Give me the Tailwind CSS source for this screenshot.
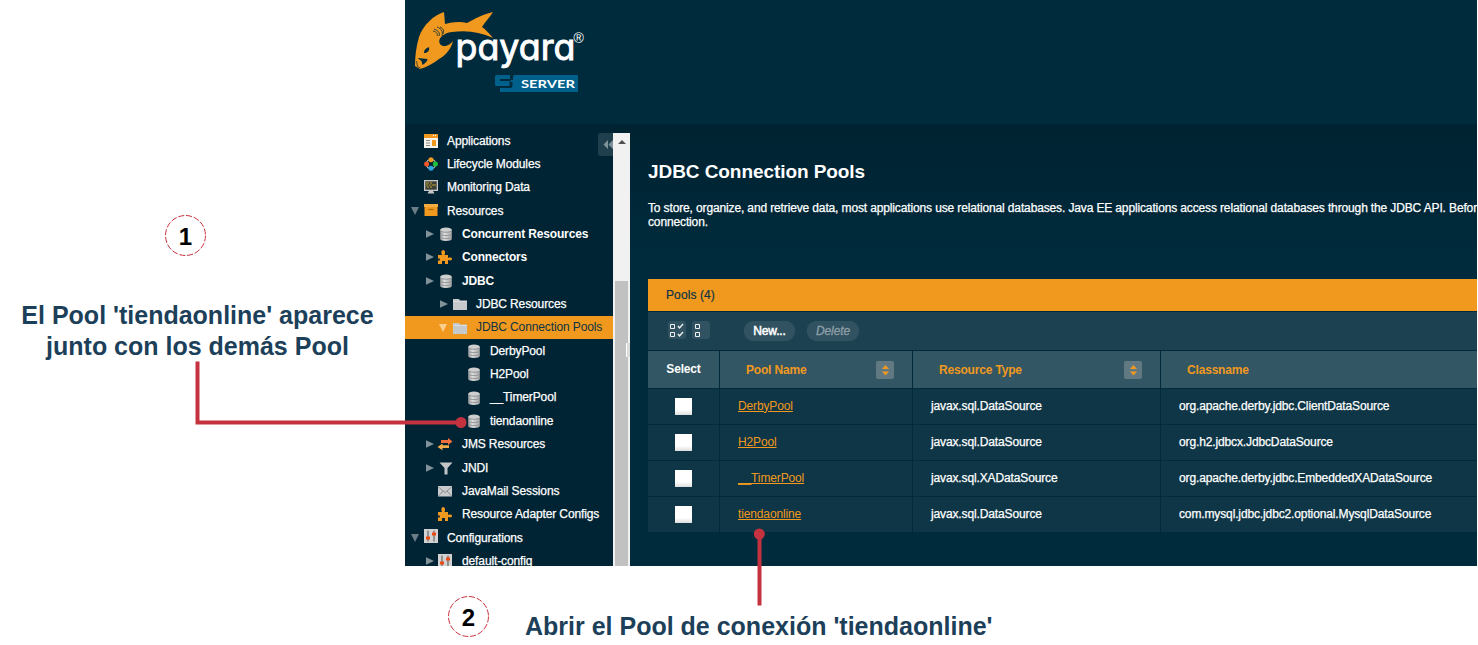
<!DOCTYPE html>
<html lang="es">
<head>
<meta charset="utf-8">
<title>Payara Server - JDBC Connection Pools</title>
<script src="https://cdn.jsdelivr.net/npm/@tailwindcss/browser@4"></script>
</head>
<body class="relative flex h-[645px] w-[1478px] flex-col overflow-hidden bg-white font-['Liberation_Sans',Arial,sans-serif] text-xs text-white">

<svg width="0" height="0" class="absolute">
  <defs>
    <linearGradient id="metal" x1="0" x2="1"><stop offset="0" stop-color="#9a9a9a"/><stop offset=".35" stop-color="#dcdcdc"/><stop offset="1" stop-color="#a6a6a6"/></linearGradient>
  </defs>
  <symbol id="db" viewBox="0 0 16 16">
    <path d="M2.200 4v9c0 1.200 2.600 2 5.800 2s5.800-.8 5.800-2V4z" fill="url(#metal)"/>
    <ellipse cx="8" cy="3.800" rx="5.800" ry="2.200" fill="#cfcfcf"/>
    <path d="M3 5.300c1.500 1.300 8.500 1.300 10 0M2.500 8.300c1.500 1.700 9.500 1.700 11 0M2.500 11.300c1.500 1.700 9.500 1.700 11 0" fill="none" stroke="#85898b" stroke-width=".8"/>
  </symbol>
  <symbol id="puzzle" viewBox="0 0 16 16">
    <path d="M1 6h4c-1.300-2.800-.4-5 1.200-5S8.700 3.200 7.500 6H11v3c2-.8 4-.4 4 1s-2 1.800-4 1v4H8v-3H5v3H1v-3.500h1.800V9.500H1z" fill="#f0991e"/>
  </symbol>
  <symbol id="folder" viewBox="0 0 16 16">
    <path d="M1 3h6l1 1.500h7V14H1z" fill="#c6c9cb"/><path d="M1 5.500h14" stroke="#dfe1e2" stroke-width=".8"/>
  </symbol>
  <symbol id="app" viewBox="0 0 16 16">
    <path d="M1 1h14v14H1z" fill="#f6f3ec"/><path d="M1 1h14v4H1z" fill="#f0991e"/><path d="M10 2.500h1M12 2.500h1" stroke="#fff"/>
    <path d="M3 7.500h4M3 10h4M3 12.500h4" stroke="#888" stroke-width="1.200"/><path d="M9 7h4v6H9z" fill="#f0991e"/>
  </symbol>
  <symbol id="life" viewBox="0 0 16 16">
    <circle cx="8" cy="8" r="4.600" fill="none" stroke="#c9cfd2" stroke-width="1.100"/>
    <circle cx="8" cy="3.700" r="2.500" fill="#f0991e"/><circle cx="12.400" cy="8" r="2.500" fill="#19c43a"/><circle cx="8" cy="12.300" r="2.500" fill="#2aa7e0"/><circle cx="3.600" cy="8" r="2.500" fill="#f0562a"/>
  </symbol>
  <symbol id="monitor" viewBox="0 0 16 16">
    <path d="M1 1h14v11H1z" fill="#c8c8c8"/><path d="M2.300 2.300h11.400v8.400H2.300z" fill="#3d3f38"/><path d="M3 4h3M7 4h2M3 6h2M6 6h1.500M8.500 6H13M4 8h2M7 8h2" stroke="#b9a32c" stroke-width="1.100"/><path d="M6 12h4l1.500 2.500h-7z" fill="#c8c8c8"/>
  </symbol>
  <symbol id="box" viewBox="0 0 16 16">
    <path d="M1 2h14v3H1z" fill="#f4ab3f"/><path d="M1.500 5h13v9h-13z" fill="#f0991e"/><path d="M5.500 7.500h5" stroke="#a7650a" stroke-width="1.200"/>
  </symbol>
  <symbol id="arrows" viewBox="0 0 16 16">
    <path d="M4 4h7V2l4.500 3.500L11 9V7H4z" fill="#f0703c"/><path d="M12 9.200H5.500V7.500L.5 11l5 3.300v-2.200H12z" fill="#f2ad4a"/>
  </symbol>
  <symbol id="funnel" viewBox="0 0 16 16"><path d="M1.500 2.500h13l-5 5.500v6.500h-3V8z" fill="#c3c6c8"/></symbol>
  <symbol id="mail" viewBox="0 0 16 16"><path d="M1 3h14v10.500H1z" fill="#c9cbcc"/><path d="M1.500 4 8 9.500 14.500 4M1.500 13 6 8M14.500 13 10 8" fill="none" stroke="#8b9093"/></symbol>
  <symbol id="sliders" viewBox="0 0 16 16"><path d="M1 1h14v14H1z" fill="#d2d2d2"/><path d="M5 2.500v11M11 2.500v11" stroke="#666" stroke-width="1.200"/><path d="M3 8.500h4v3H3zM9 4.500h4v3H9z" fill="#ee4a14"/></symbol>
  <symbol id="right" viewBox="0 0 8 8"><path d="M0 .2 8 4 0 7.800z" fill="#81929b"/></symbol>
  <symbol id="down" viewBox="0 0 8 8"><path d="M0 0h8L4 8z" fill="currentColor"/></symbol>
  <symbol id="sort" viewBox="0 0 18 18"><path d="M6 8l3.500-4L13 8zM6 10.500h7L9.500 14.500z" fill="#f0991e"/></symbol>
</svg>

<div class="flex h-[566px]">
  <section class="flex w-[405px] shrink-0 flex-col items-center text-2xl font-bold text-[#1c4059]">
    <div class="mt-[215px] mr-[34px] flex size-[41px] items-center justify-center text-black">
      <svg class="absolute size-[41px]" viewBox="0 0 41 41"><circle cx="20.500" cy="20.500" r="20" fill="none" stroke="#c8323f" stroke-dasharray="6 1.850"/></svg>
      <span class="relative top-[1px]">1</span>
    </div>
    <p class="mt-[44px] mr-[10px] text-center text-[25px] leading-[31px] whitespace-nowrap">El Pool 'tiendaonline' aparece<br>junto con los demás Pool</p>
  </section>

  <main class="flex w-[1072px] flex-col overflow-hidden bg-[#002b3c]">
    <header class="h-[124px] shrink-0">
      <svg width="200" height="124" viewBox="0 0 200 124">
        <path d="M39 12 C29 15 18 25 14 37 C11 47 10 57 10 66 L15 69 C22 67 29 63 34 59 C41 55 46 49 48 41 C44 46 38 48 35 44 C32 39 38 33 47 32 C62 30 75 32 88 38 C84 33 80 29 77 27 C80 22 85 17 88 12 C79 14 69 19 62 23 C55 21 47 22 40 24 Z" fill="#f0991e"/>
        <path d="M12.500 58l10 1c0 2-2 4-5 6l-1-4zM19 53c0-4 3-5 5-6 1 4-2 6-5 6z" fill="#002b3c"/>
        <path d="M11.500 61l1 5.500 3 1.500" fill="none" stroke="#002b3c" stroke-width=".7"/>
        <path d="M32 27c5 2 6 5 5 9M35 27c4 2 4 4 3 7M29 29c5 2 6 4 5 7M28 31c4 1 5 3 4 5" fill="none" stroke="#002b3c" stroke-width=".8"/>
        <text class="font-['Inter',sans-serif] text-[36px] font-normal [font-feature-settings:'cv11']" x="50.500" y="60" textLength="120" lengthAdjust="spacingAndGlyphs" fill="#fff" stroke="#fff" stroke-width=".9">payara</text>
        <text x="168.500" y="43" font-size="14" fill="#fff">®</text>
        <path d="M91.500 75H105v4H95v2h9.500v5H91.500q-1.500 0-1.500-1.500v-8q0-1.500 1.500-1.500zM110 75h62q1 0 1 1v15q0 1-1 1H95v-4h10.500q2 0 2-2v-4h-2v-2h2.500v-3.500q0-1.500 2-1.500z" fill="#00608c"/>
        <text class="font-['Lato',sans-serif] text-[11.5px] font-bold" x="116" y="87.500" textLength="54" lengthAdjust="spacingAndGlyphs" fill="#fff">SERVER</text>
      </svg>
    </header>

    <div class="flex grow bg-linear-to-b from-[#002231] from-0% to-[#002b3c] to-30%">
      <nav class="relative w-[208px] shrink-0 overflow-hidden bg-[#002434] pt-[5px] tracking-[-0.12px] [-webkit-text-stroke:0.25px]">
        <button class="absolute top-[9px] right-0 flex h-[23px] w-[15px] items-center justify-end rounded-l-[3px] bg-[#1f3f4d]"><svg width="10" height="10" viewBox="0 0 10 10"><path d="M5 0v9L.5 4.500zM10 0v9L5.500 4.500z" fill="#7f919a"/></svg></button>
        <ul class="h-[437px] leading-[23.36px] whitespace-nowrap text-white">
          <li class="flex h-[23.36px] items-center pl-[18px]"><svg class="mr-2 size-4"><use href="#app"/></svg><span class="pt-px">Applications</span></li>
          <li class="flex h-[23.36px] items-center pl-[18px]"><svg class="mr-2 size-4"><use href="#life"/></svg><span class="pt-px">Lifecycle Modules</span></li>
          <li class="flex h-[23.36px] items-center pl-[18px]"><svg class="mr-2 size-4"><use href="#monitor"/></svg><span class="pt-px">Monitoring Data</span></li>
          <li class="flex h-[23.36px] items-center pl-1.5"><svg class="mr-1 size-2 text-[#6a7d87]"><use href="#down"/></svg><svg class="mr-2 mb-0.5 size-4"><use href="#box"/></svg><span class="pt-px">Resources</span></li>
          <li class="flex h-[23.36px] items-center pl-[21px] font-bold tracking-[-0.16px] [-webkit-text-stroke:0px]"><svg class="mr-1 size-2"><use href="#right"/></svg><svg class="mr-2 size-4"><use href="#db"/></svg><span class="pt-px">Concurrent Resources</span></li>
          <li class="flex h-[23.36px] items-center pl-[21px] font-bold tracking-[-0.16px] [-webkit-text-stroke:0px]"><svg class="mr-[3px] size-2"><use href="#right"/></svg><svg class="mr-[9px] size-4"><use href="#puzzle"/></svg><span class="pt-px">Connectors</span></li>
          <li class="flex h-[23.36px] items-center pl-[21px] font-bold tracking-[-0.16px] [-webkit-text-stroke:0px]"><svg class="mr-1 size-2"><use href="#right"/></svg><svg class="mr-2 size-4"><use href="#db"/></svg><span class="pt-px">JDBC</span></li>
          <li class="flex h-[23.36px] items-center pl-[35px]"><svg class="mr-1 size-2"><use href="#right"/></svg><svg class="mr-2 size-4"><use href="#folder"/></svg>JDBC Resources</li>
          <li class="flex h-[23.36px] items-center bg-[#f0991e] pl-[34px] text-[#0d3444] [-webkit-text-stroke:0px]"><svg class="mr-[5px] size-2 text-[#fbd08c]"><use href="#down"/></svg><svg class="mr-2 size-4"><use href="#folder"/></svg><span class="pt-px">JDBC Connection Pools</span></li>
          <li class="flex h-[23.36px] items-center pl-[61px]"><svg class="mr-2 size-4"><use href="#db"/></svg><span class="pt-px">DerbyPool</span></li>
          <li class="flex h-[23.36px] items-center pl-[61px]"><svg class="mr-2 size-4"><use href="#db"/></svg>H2Pool</li>
          <li class="flex h-[23.36px] items-center pl-[61px]"><svg class="mr-2 size-4"><use href="#db"/></svg><span class="pt-px">__TimerPool</span></li>
          <li class="flex h-[23.36px] items-center pl-[61px]"><svg class="mr-2 size-4"><use href="#db"/></svg><span class="pt-px">tiendaonline</span></li>
          <li class="flex h-[23.36px] items-center pl-[21px]"><svg class="mr-[3px] size-2"><use href="#right"/></svg><svg class="mr-[9px] size-4"><use href="#arrows"/></svg><span class="pt-px">JMS Resources</span></li>
          <li class="flex h-[23.36px] items-center pl-[21px]"><svg class="mr-1 size-2"><use href="#right"/></svg><svg class="mr-2 size-4"><use href="#funnel"/></svg><span class="pt-px">JNDI</span></li>
          <li class="flex h-[23.36px] items-center pl-8"><svg class="mr-[9px] size-4"><use href="#mail"/></svg><span class="pt-px">JavaMail Sessions</span></li>
          <li class="flex h-[23.36px] items-center pl-8"><svg class="mr-[9px] size-4"><use href="#puzzle"/></svg><span class="pt-px">Resource Adapter Configs</span></li>
          <li class="flex h-[23.36px] items-center pl-1.5"><svg class="mr-1 size-2 text-[#6a7d87]"><use href="#down"/></svg><svg class="mr-2 mb-1 size-4"><use href="#sliders"/></svg><span class="pt-px">Configurations</span></li>
          <li class="flex h-[23.36px] items-center pl-[21px]"><svg class="mr-[3px] size-2"><use href="#right"/></svg><svg class="mr-[9px] size-4"><use href="#sliders"/></svg><span class="pt-px">default-config</span></li>
        </ul>
      </nav>

      <div class="relative mt-[9px] flex w-[17px] shrink-0 flex-col items-center bg-[#f1f1f1]">
        <svg class="mt-[7px] h-1 w-2" viewBox="0 0 8 4"><path d="M0 4 4 0l4 4z" fill="#505050"/></svg>
        <div class="mt-[137px] w-[13px] grow bg-[#c1c1c1]"></div>
        <div class="absolute top-[210px] left-[13px] h-[14px] w-[4px] border-l border-white bg-[#dcdcdc]"></div>
      </div>

      <section class="ml-[18px] flex w-[829px] shrink-0 flex-col">
        <h1 class="mt-[36px] text-[19px] leading-6 font-bold tracking-[-0.07px]">JDBC Connection Pools</h1>
        <p class="mt-[17px] text-xs leading-[14px] tracking-[-0.135px] whitespace-nowrap [-webkit-text-stroke:0.25px]">To store, organize, and retrieve data, most applications use relational databases. Java EE applications access relational databases through the JDBC API. Befor<br>connection.</p>

        <div class="mt-[50px] flex h-8 shrink-0 items-center bg-[#f0991e] pl-[18px] tracking-[0.1px] text-[#0d3444] [-webkit-text-stroke:0.2px]">Pools (4)</div>
        <div class="mt-px flex h-[38px] shrink-0 items-center bg-[#1c4151] pl-5">
          <svg class="mb-0.5" width="42" height="18" viewBox="0 0 42 18">
            <rect width="18" height="18" rx="3" fill="#315361"/><rect x="24" width="18" height="18" rx="3" fill="#315361"/>
            <g fill="none" stroke="#f2f2f2"><path d="M2.500 3.500h4v4h-4zM2.500 11.500h4v4h-4zM27.500 3.500h4v4h-4zM27.500 11.500h4v4h-4z"/><path d="M10 5l1.500 2L15 3M10 13l1.500 2L15 11" stroke-width="1.300"/></g>
          </svg>
          <button class="ml-[34px] h-5 w-[51px] rounded-[9px] bg-[#315361] tracking-[-0.12px] [-webkit-text-stroke:0.5px]">New...</button>
          <button class="ml-3 h-5 w-[52px] rounded-[9px] bg-[#315361] tracking-[-0.12px] text-[#8d9fa8] italic [-webkit-text-stroke:0.3px]">Delete</button>
        </div>
        <div class="mt-px grid h-[37px] shrink-0 grid-cols-[71px_192px_247px_1fr] gap-px font-bold tracking-[-0.18px] text-[#f0991e]">
          <div class="flex items-center justify-center bg-[#325664] text-white"><span class="-mt-0.5">Select</span></div>
          <div class="flex items-center justify-between bg-[#325664] pr-[18px] pl-[26px]">Pool Name<svg class="size-[18px] rounded-[2px] bg-[#617983]"><use href="#sort"/></svg></div>
          <div class="flex items-center justify-between bg-[#325664] pr-[18px] pl-[26px]">Resource Type<svg class="size-[18px] rounded-[2px] bg-[#617983]"><use href="#sort"/></svg></div>
          <div class="flex items-center bg-[#325664] pl-[26px]">Classname</div>
        </div>
        <div class="mt-px grid shrink-0 auto-rows-[35px] grid-cols-[71px_192px_247px_1fr] gap-px tracking-[-0.13px] *:flex *:items-center *:bg-[#0e3646] *:pb-0.5 *:pl-[18px] [-webkit-text-stroke:0.25px]">
          <div><i class="mt-0.5 ml-[9px] size-[17px] bg-linear-to-b from-white from-70% to-[#ddd]"></i></div>
          <div><a class="text-[#f0991e] underline [-webkit-text-stroke:0px]">DerbyPool</a></div><div>javax.sql.DataSource</div><div>org.apache.derby.jdbc.ClientDataSource</div>
          <div><i class="mt-0.5 ml-[9px] size-[17px] bg-linear-to-b from-white from-70% to-[#ddd]"></i></div>
          <div><a class="text-[#f0991e] underline [-webkit-text-stroke:0px]">H2Pool</a></div><div>javax.sql.DataSource</div><div>org.h2.jdbcx.JdbcDataSource</div>
          <div><i class="mt-0.5 ml-[9px] size-[17px] bg-linear-to-b from-white from-70% to-[#ddd]"></i></div>
          <div><a class="text-[#f0991e] underline [-webkit-text-stroke:0px]">__TimerPool</a></div><div>javax.sql.XADataSource</div><div>org.apache.derby.jdbc.EmbeddedXADataSource</div>
          <div><i class="mt-0.5 ml-[9px] size-[17px] bg-linear-to-b from-white from-70% to-[#ddd]"></i></div>
          <div><a class="text-[#f0991e] underline [-webkit-text-stroke:0px]">tiendaonline</a></div><div>javax.sql.DataSource</div><div>com.mysql.jdbc.jdbc2.optional.MysqlDataSource</div>
        </div>
      </section>
    </div>
  </main>
</div>

<footer class="flex h-[79px] items-start pl-[448px] font-bold text-[#1c4059]">
  <div class="mt-[30px] flex size-[41px] items-center justify-center text-2xl text-black">
    <svg class="absolute size-[41px]" viewBox="0 0 41 41"><circle cx="20.500" cy="20.500" r="20" fill="none" stroke="#c8323f" stroke-dasharray="6 1.850"/></svg>
    <span class="relative top-[1px]">2</span>
  </div>
  <p class="mt-[45px] ml-9 text-[25px] leading-[31px] whitespace-nowrap">Abrir el Pool de conexión 'tiendaonline'</p>
</footer>

<svg class="pointer-events-none absolute inset-0" width="1478" height="645" viewBox="0 0 1478 645">
  <path d="M197.500 361.500V422.500H461M759.500 534V605.500" fill="none" stroke="#c5323f" stroke-width="4"/>
  <circle cx="461" cy="422.500" r="5.500" fill="#c5323f"/><circle cx="759.300" cy="534" r="5.500" fill="#c5323f"/>
</svg>
</body>
</html>
